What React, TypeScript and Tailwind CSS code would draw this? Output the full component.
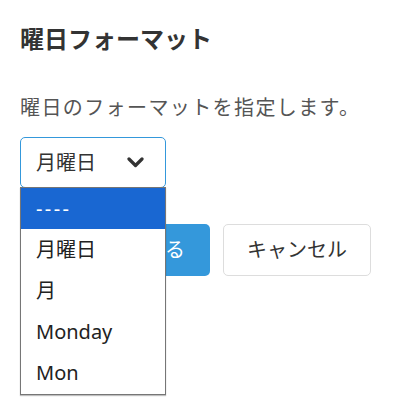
import { useState } from 'react';

const options = ['----', '月曜日', '月', 'Monday', 'Mon'];

const Chevron = () => (
  <svg width="17" height="11" viewBox="0 0 17 11" className="text-[#333]">
    <polyline points="2,2 8.5,8.5 15,2" fill="none" stroke="currentColor" strokeWidth="3.2" strokeLinecap="round" strokeLinejoin="round" />
  </svg>
);

export default function App() {
  const [value] = useState('月曜日');

  return (
    <div
      className="min-h-screen bg-white px-5 pt-[22px] text-[#333]"
      style={{ fontFamily: '"Noto Sans", "Noto Sans CJK JP", sans-serif' }}
    >
      {/* Title */}
      <h2 className="text-[24px] leading-[34px] font-bold text-[#333]">曜日フォーマット</h2>

      {/* Description */}
      <p className="mt-[38px] text-[20px] leading-[28px] tracking-[0.07em] text-[#555]">曜日のフォーマットを指定します。</p>

      {/* Select with open list */}
      <div className="relative mt-[15px] w-[146px]">
        <div className="flex h-[51px] items-center justify-between rounded-[5px] border border-[#3498db] bg-white pl-[15px] pr-[21px] text-[20px]">
          <span>{value}</span>
          <Chevron />
        </div>
        <ul className="absolute left-0 top-[50px] z-10 w-[146px] border border-[#767676] bg-white text-[20px] shadow-[0_1px_1px_rgba(0,0,0,0.25)]">
          {options.map((o, i) => (
            <li
              key={o}
              className={`flex h-[41.2px] items-center pl-[15px] ${i === 0 ? 'bg-[#1967d2] tracking-[0.12em] text-white' : 'text-[#222]'}`}
            >
              {o}
            </li>
          ))}
        </ul>
      </div>

      {/* Buttons */}
      <div className="mt-[36px] flex gap-[13px]">
        <button className="h-[52px] w-[190px] rounded-[5px] bg-[#3498db] text-[20px] text-white">変更を保存する</button>
        <button className="h-[52px] w-[148px] rounded-[5px] border border-[#dddddd] bg-white text-[20px] text-[#333]">キャンセル</button>
      </div>
    </div>
  );
}
